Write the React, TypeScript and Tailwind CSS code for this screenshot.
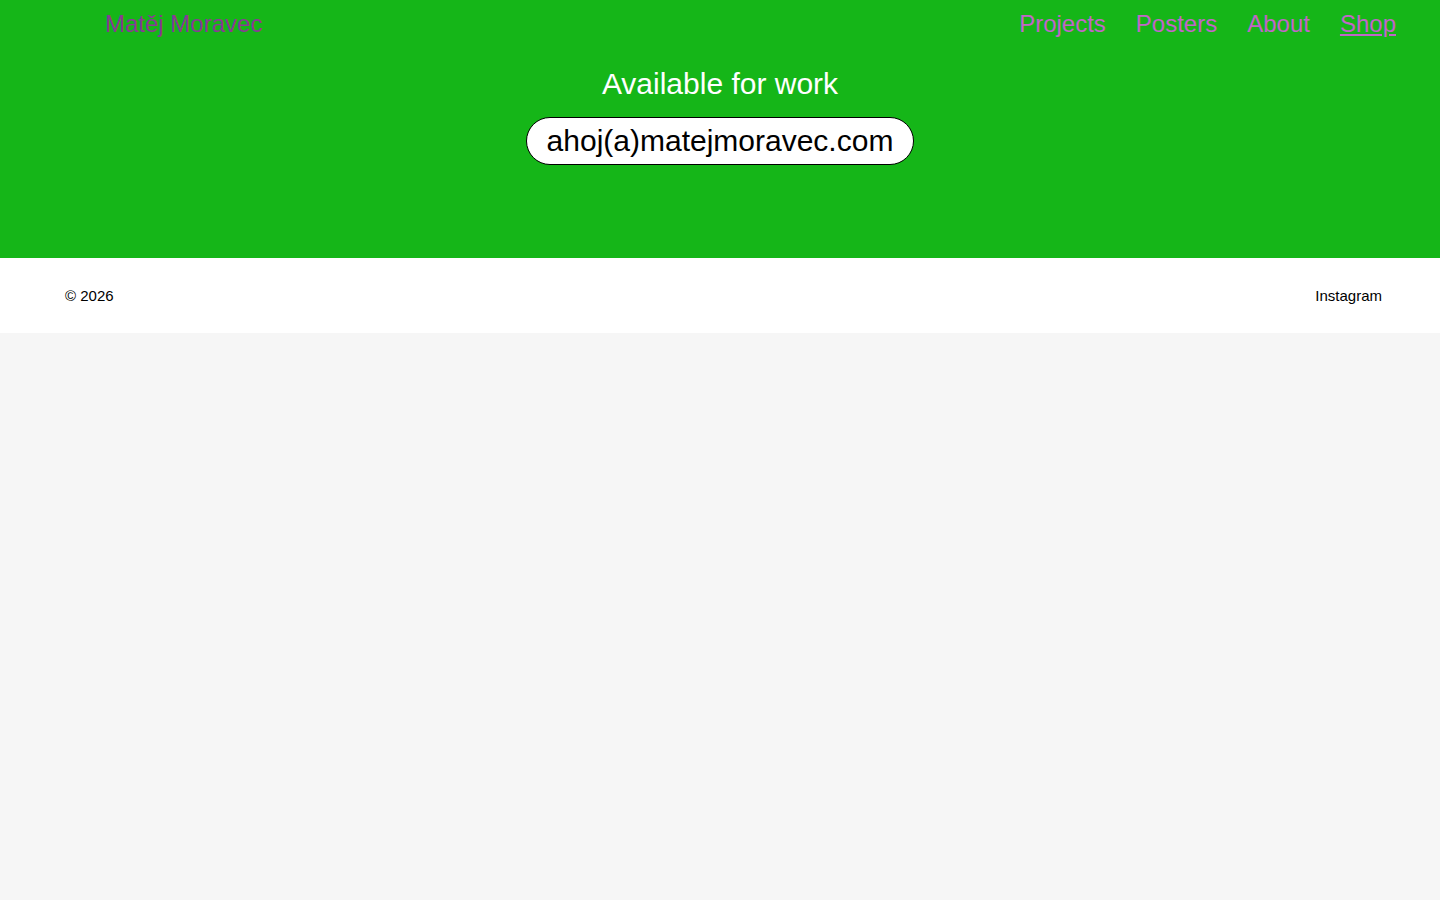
import React from 'react';

const links = ['Projects', 'Posters', 'About', 'Shop'];

const App: React.FC = () => {
  return (
    <div className="min-h-screen bg-[#f6f6f6] font-['Liberation_Sans',Arial,sans-serif]">
      {/* Header */}
      <div className="bg-[#15b618] h-[258px]">
        <div className="flex items-center justify-between pl-[105px] pr-[44px] h-[48px] text-[24px]">
          <a className="text-[#8a3a95]">Matěj Moravec</a>
          <nav className="flex gap-[30px]">
            {links.map((l) => (
              <a key={l} className={`text-[#c166c8] ${l === 'Shop' ? 'underline underline-offset-2' : ''}`}>
                {l}
              </a>
            ))}
          </nav>
        </div>
        <div className="flex flex-col items-center">
          <p className="text-white text-[30px] leading-[34px] mt-[19px]">Available for work</p>
          <a className="mt-[16px] bg-white text-black text-[30px] leading-[46px] px-[20px] border border-black rounded-full">
            ahoj(a)matejmoravec.com
          </a>
        </div>
      </div>

      {/* Footer */}
      <div className="bg-white h-[75px] flex items-center justify-between pl-[65px] pr-[58px] pt-[2px] text-[15px] text-black">
        <span>© 2026</span>
        <a>Instagram</a>
      </div>
    </div>
  );
};

export default App;
